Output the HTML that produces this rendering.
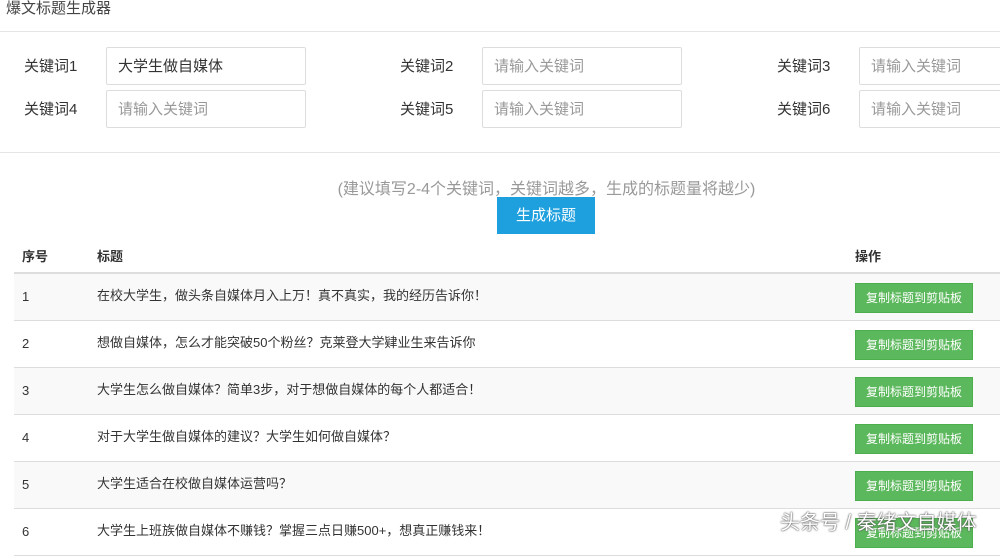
<!DOCTYPE html>
<html><head><meta charset="utf-8"><style>
*{margin:0;padding:0;box-sizing:border-box}
body{width:1000px;height:546px;overflow:hidden;background:#fff;font-family:"Liberation Sans","Noto Sans CJK SC",sans-serif;color:#333;position:relative}
.a{position:absolute}
.title{left:6px;top:-3px;font-size:15px;color:#444}
.hr{left:0;width:1000px;height:1px;background:#e5e5e5}
.lbl{font-size:15px;color:#333;line-height:20px}
.inp{height:38px;border:1px solid #ddd;border-radius:2px;font-size:15px;padding:0 11px;line-height:38px;color:#999;width:200px}
.inp.v{color:#333}
.hint{left:0;width:1093px;text-align:center;top:175px;font-size:16px;color:#999}
.gen{left:497px;top:197px;width:98px;height:37px;background:#1e9fde;color:#fff;font-size:15px;text-align:center;line-height:37px}
.th{font-size:13px;font-weight:bold;color:#333;top:246px}
.row{left:14px;width:986px;height:47px;border-bottom:1px solid #ddd;font-size:13px}
.row span{position:absolute;top:13px;line-height:18px}
.btn{position:absolute;left:841px;top:9px;width:118px;height:30px;background:#5cb85c;border:1px solid #4cae4c;color:#fff;font-size:12px;text-align:center;line-height:28px}
.wm{left:780px;top:506px;font-size:20px;color:#fff;text-shadow:0 0 2px #555,0 0 1px #333}
</style></head><body>
<div class="a title">爆文标题生成器</div>
<div class="a hr" style="top:31px"></div>
<div class="a lbl" style="left:24px;top:57px">关键词1</div>
<div class="a inp v" style="left:106px;top:47px">大学生做自媒体</div>
<div class="a lbl" style="left:400px;top:57px">关键词2</div>
<div class="a inp" style="left:482px;top:47px">请输入关键词</div>
<div class="a lbl" style="left:777px;top:57px">关键词3</div>
<div class="a inp" style="left:859px;top:47px">请输入关键词</div>
<div class="a lbl" style="left:24px;top:100px">关键词4</div>
<div class="a inp" style="left:106px;top:90px">请输入关键词</div>
<div class="a lbl" style="left:400px;top:100px">关键词5</div>
<div class="a inp" style="left:482px;top:90px">请输入关键词</div>
<div class="a lbl" style="left:777px;top:100px">关键词6</div>
<div class="a inp" style="left:859px;top:90px">请输入关键词</div>
<div class="a hr" style="top:152px"></div>
<div class="a hint">(建议填写2-4个关键词，关键词越多，生成的标题量将越少)</div>
<div class="a gen">生成标题</div>
<div class="a th" style="left:22px">序号</div>
<div class="a th" style="left:97px">标题</div>
<div class="a th" style="left:855px">操作</div>
<div class="a" style="left:14px;top:272px;width:986px;height:2px;background:#ddd"></div>
<div class="a row" style="top:274px;background:#f9f9f9"><span style="left:8px;top:14px">1</span><span style="left:83px">在校大学生，做头条自媒体月入上万！真不真实，我的经历告诉你！</span><div class="btn">复制标题到剪贴板</div></div>
<div class="a row" style="top:321px"><span style="left:8px;top:14px">2</span><span style="left:83px">想做自媒体，怎么才能突破50个粉丝？克莱登大学肄业生来告诉你</span><div class="btn">复制标题到剪贴板</div></div>
<div class="a row" style="top:368px;background:#f9f9f9"><span style="left:8px;top:14px">3</span><span style="left:83px">大学生怎么做自媒体？简单3步，对于想做自媒体的每个人都适合！</span><div class="btn">复制标题到剪贴板</div></div>
<div class="a row" style="top:415px"><span style="left:8px;top:14px">4</span><span style="left:83px">对于大学生做自媒体的建议？大学生如何做自媒体？</span><div class="btn">复制标题到剪贴板</div></div>
<div class="a row" style="top:462px;background:#f9f9f9"><span style="left:8px;top:14px">5</span><span style="left:83px">大学生适合在校做自媒体运营吗？</span><div class="btn">复制标题到剪贴板</div></div>
<div class="a row" style="top:509px"><span style="left:8px;top:14px">6</span><span style="left:83px">大学生上班族做自媒体不赚钱？掌握三点日赚500+，想真正赚钱来！</span><div class="btn">复制标题到剪贴板</div></div>
<div class="a wm">头条号 / 秦绪文自媒体</div>
</body></html>
